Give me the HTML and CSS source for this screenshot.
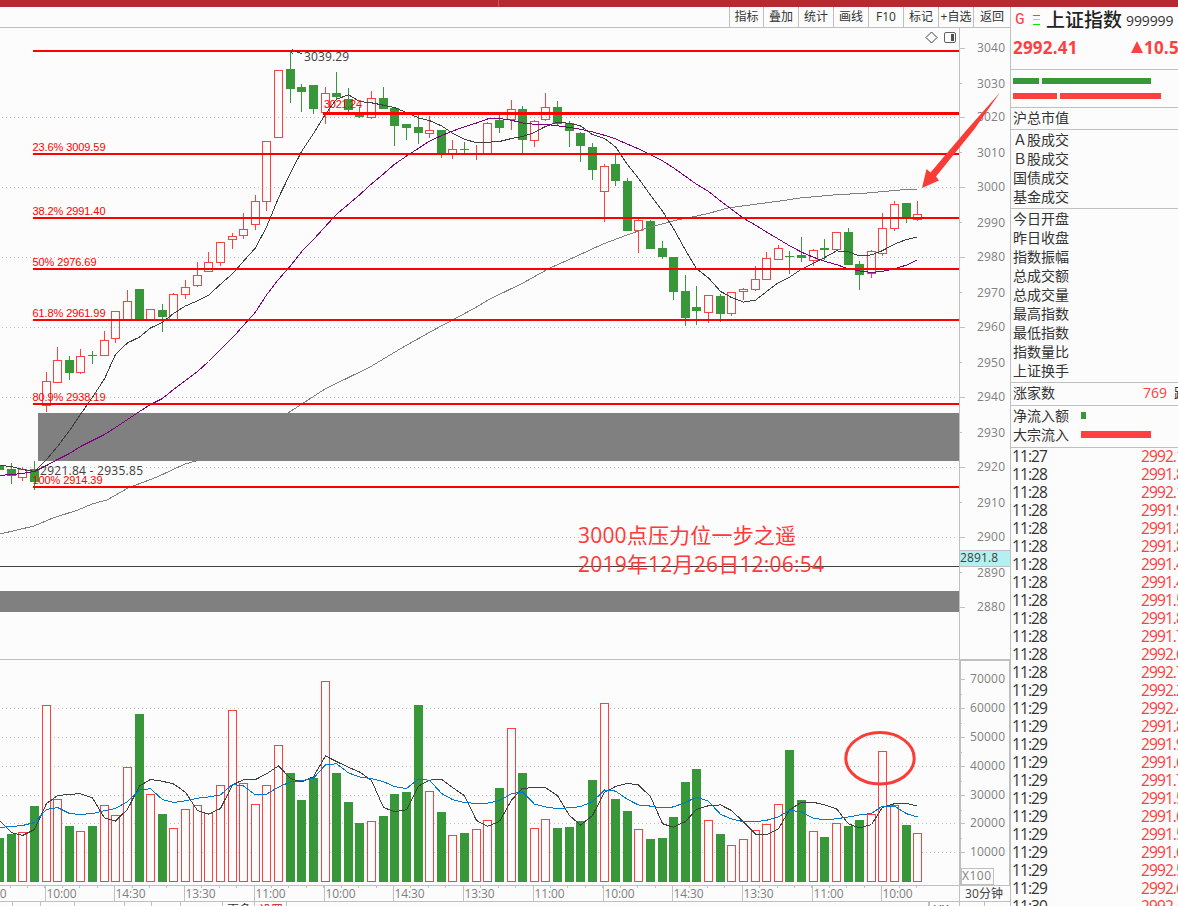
FILE: index.html
```html
<!DOCTYPE html>
<html lang="zh-CN">
<head>
    <meta charset="UTF-8">
    <meta name="viewport" content="width=device-width, initial-scale=1.0">
    <title>上证指数 999999</title>
    <link rel="stylesheet" href="styles.css">
</head>
<body>
    <div class="titlebar"></div>
    <div class="main">
        <div class="left">
            <div class="toolbar">
                <span class="tool first">指标</span>
                <span class="tool">叠加</span>
                <span class="tool">统计</span>
                <span class="tool">画线</span>
                <span class="tool">F10</span>
                <span class="tool">标记</span>
                <span class="tool">+自选</span>
                <span class="tool last">返回</span>
            </div>
            <svg class="chart" width="1010" height="878" viewBox="0 28 1010 878">
                <g id="grid"></g>
                <g id="candles"></g>
                <path class="ma60" d="M0 534L34 526L53 518L78 510L92 504L107 500L128 488L157 477L185 464L196 461L240 438L288 413L325 389L370 367L400 349L430 332L460 316L475 308L490 299L523 283L550 268L577 256L603 244L627 235L647 228L677 220L695 216.5L710 213L728 208L757 204L780 201L800 198L833 195L867 193L900 190L917 189"/>
                <!-- gaps -->
                <rect class="gap" x="38" y="413" width="921" height="48"/>
                <rect class="gap" x="0" y="591" width="959" height="21"/>
                <g id="averages"></g>
                <rect class="cross" x="0" y="566" width="959" height="1"/>
                <g id="fib"></g>
                <text class="fib-text" x="324" y="108" textLength="38">3021.24</text>
                <rect class="fib-line" x="323" y="112" width="636" height="3"/>
                <path class="pointer" d="M291 51L293 49M293 54L291 52M295 51L302 54"/>
                <text class="note" x="304" y="61" textLength="45">3039.29</text>
                <text class="note" x="40" y="475" textLength="103">2921.84 - 2935.85</text>
                <path class="diamond" d="M931.5 32L937 37.5L931.5 43L926 37.5Z"/>
                <rect class="pane" x="944.5" y="32.5" width="11" height="10" rx="1.5"/>
                <rect class="pane-fill" x="951" y="34" width="3" height="7"/>
                <g id="volume"></g>
                <g id="axis"></g>
                <rect class="price-tag" x="959.5" y="550.5" width="51" height="16"/>
                <text class="note" x="960" y="562" textLength="38">2891.8</text>
                <rect class="frame" x="960.5" y="660.5" width="49" height="225"/>
                <rect class="frame" x="961.5" y="868.5" width="32" height="16"/>
                <text class="label" x="962" y="880" textLength="29">X100</text>
                <text class="note" x="965" y="898" textLength="38">30分钟</text>
                <text class="big" x="578" y="543" textLength="218">3000点压力位一步之遥</text>
                <text class="big" x="578" y="572" textLength="246">2019年12月26日12:06:54</text>
                <ellipse class="circle" cx="880" cy="758.3" rx="34.2" ry="25.7"/>
                <path class="arrow" d="M922 188L926.5 169L930.5 172.5L967.5 129L1000 92.5L974.5 129L936 176.5L939 180.5Z"/>
                <text class="tab" x="227" y="914">更多</text>
                <text class="tab red" x="259" y="915">设置</text>
                <text class="tab" x="934" y="914">VK</text>
            </svg>
        </div>
        <div class="panel">
            <div class="head">
                <div class="name">
                    <span class="g">G</span>
                    <svg class="bars" width="8" height="12" viewBox="0 0 8 12">
                        <rect x="0" y="1" width="7" height="1" fill="#ff4040"/>
                        <rect x="0" y="5" width="7" height="1" fill="#c0c0c0"/>
                        <rect x="0" y="10" width="7" height="1" fill="#00e600"/>
                    </svg>
                    <span class="stock">上证指数</span>
                    <span class="code">999999</span>
                </div>
                <div class="price"><span class="last-price">2992.41</span><svg class="up" width="12" height="12" viewBox="0 0 12 12"><path d="M6 0L12 12H0Z"/></svg><span>10.53</span></div>
            </div>
            <div class="strength">
                <div class="strip green"><i class="w26"></i><i class="w109"></i></div>
                <div class="strip"><i class="w44"></i><i class="w101"></i></div>
            </div>
            <div class="box cap"><p>沪总市值</p></div>
            <div class="box deal">
                <p>Ａ股成交</p>
                <p>Ｂ股成交</p>
                <p>国债成交</p>
                <p>基金成交</p>
            </div>
            <div class="box index">
                <p>今日开盘</p>
                <p>昨日收盘</p>
                <p>指数振幅</p>
                <p>总成交额</p>
                <p>总成交量</p>
                <p>最高指数</p>
                <p>最低指数</p>
                <p>指数量比</p>
                <p>上证换手</p>
            </div>
            <div class="box count"><p><span class="count-name">涨家数</span><span class="count-num">769</span>跌</p></div>
            <div class="box flow">
                <p>净流入额<i class="bar green"></i></p>
                <p>大宗流入<i class="bar big-in"></i></p>
            </div>
            <div class="ticks" id="ticks"></div>
        </div>
    </div>
    <script src="chart.js"></script>
</body>
</html>
```

FILE: styles.css
```css
* {
    box-sizing: border-box;
}
body {
    margin: 0;
    width: 1178px;
    height: 906px;
    overflow: hidden;
    background-color: #fcfcfc;
    color: #333;
    font-family: "Open Sans", "Noto Sans CJK SC", sans-serif;
}
p {
    margin: 0;
}
.titlebar {
    height: 7px;
    background: linear-gradient(to right, #b42a30 498px, #c8565a 498px, #c8565a 499px, #b42a30 499px);
}
.main {
    display: flex;
    height: 899px;
}
.left {
    width: 1010px;
    flex: none;
}
.toolbar {
    display: flex;
    justify-content: flex-end;
    height: 21px;
    border-bottom: 1px solid #c0c0c0;
}
.tool {
    width: 35px;
    border-left: 1px solid #c0c0c0;
    font-size: 12px;
    line-height: 19px;
    text-align: center;
    white-space: nowrap;
}
.tool.first {
    width: 34px;
}
.tool.last {
    width: 37px;
}
.chart {
    display: block;
    font-size: 12px;
    shape-rendering: crispEdges;
}
.dots {
    stroke: #c0c0c0;
    stroke-dasharray: 1 3;
}
.line {
    fill: #c0c0c0;
}
.frame {
    fill: none;
    stroke: #c0c0c0;
}
.label {
    fill: #808080;
}
.note {
    fill: #404040;
}
.up-bar {
    fill: #fcfcfc;
    stroke: #ff4040;
}
.up-bar.hollow {
    fill: none;
}
.up-wick {
    fill: #ff4040;
}
.down-bar {
    fill: #389738;
}
.ma60, .ma7, .ma20, .ma10 {
    fill: none;
    stroke: #808080;
    stroke-width: 1;
}
.ma7 {
    stroke: #404040;
}
.ma20 {
    stroke: #800080;
}
.ma10 {
    stroke: #0078d0;
}
.gap {
    fill: #808080;
}
.cross {
    fill: #404040;
}
.fib-line {
    fill: #f00;
}
.fib-text {
    fill: #f00;
    font-family: "Liberation Sans", Arial, sans-serif;
    font-size: 11px;
}
.pointer, .diamond {
    fill: none;
    stroke: #404040;
}
.diamond {
    shape-rendering: auto;
}
.pane {
    fill: none;
    stroke: #606060;
    shape-rendering: auto;
}
.pane-fill {
    fill: #505050;
}
.price-tag {
    fill: #b4f0f0;
    stroke: #c0c0c0;
}
.big {
    fill: #ff3838;
    font-size: 21px;
}
.circle {
    fill: none;
    stroke: #fb3b36;
    stroke-width: 3;
    shape-rendering: auto;
}
.arrow {
    fill: #fb3b36;
    shape-rendering: auto;
}
.tab {
    fill: #333;
    font-size: 12px;
}
.tab.red {
    fill: #c00;
}
.panel {
    width: 168px;
    flex: none;
    overflow: hidden;
    border-left: 1px solid #c0c0c0;
    font-size: 14px;
}
.head {
    height: 63px;
    border-bottom: 1px solid #c0c0c0;
    white-space: nowrap;
}
.name {
    display: flex;
    align-items: center;
    height: 26px;
}
.g {
    width: 22px;
    padding-left: 4px;
    color: #ff4040;
    font-family: "Liberation Mono", monospace;
    font-size: 16px;
}
.bars {
    width: 8px;
    margin-right: 5px;
    flex: none;
}
.stock {
    width: 80px;
    font-size: 19px;
    font-weight: 500;
    line-height: 26px;
    color: #222;
}
.code {
    font-size: 14px;
    line-height: 26px;
    padding-top: 2px;
    letter-spacing: -0.1px;
}
.price {
    display: flex;
    align-items: center;
    height: 28px;
    padding-left: 2px;
    color: #ff4040;
    font-size: 17px;
    font-weight: bold;
    letter-spacing: 0.2px;
}
.last-price {
    width: 118px;
    flex: none;
}
.up {
    flex: none;
    margin-right: 1px;
    fill: #ff4040;
}
.strength {
    height: 38px;
    padding: 8px 0 0 2px;
    border-bottom: 1px solid #c0c0c0;
}
.strip {
    display: flex;
    gap: 3px;
    height: 6px;
    margin-bottom: 9px;
}
.strip i {
    background-color: #ff4040;
}
.strip.green i {
    background-color: #389738;
}
.w26 {
    width: 26px;
}
.w109 {
    width: 109px;
}
.w44 {
    width: 44px;
}
.w101 {
    width: 101px;
}
.box {
    padding: 0 0 0 2px;
    border-bottom: 1px solid #c0c0c0;
    line-height: 19px;
    white-space: nowrap;
}
.box p {
    display: flex;
    align-items: center;
    height: 19px;
}
.cap {
    height: 22px;
}
.deal {
    height: 79px;
}
.index {
    height: 174px;
}
.count {
    height: 23px;
}
.count-name {
    width: 130px;
    flex: none;
}
.count-num {
    width: 31px;
    flex: none;
    color: #ff4040;
}
.flow {
    height: 42px;
}
.bar {
    height: 7px;
    margin-left: 12px;
    background-color: #ff4040;
}
.bar.green {
    width: 5px;
    background-color: #389738;
}
.bar.big-in {
    width: 70px;
}
.ticks {
    margin-top: -1px;
}
.tick {
    display: flex;
    height: 18px;
    padding-left: 1px;
    font-size: 15.5px;
    line-height: 18px;
    letter-spacing: -0.9px;
}
.tick-time {
    width: 129px;
    flex: none;
}
.tick-price {
    color: #ff4040;
}
```

FILE: chart.js
```js
// direction, high, body top, body bottom, low, volume top
const bars = [
    'g 464 465 470 470 838', 'g 463 469 476 484 834', 'r 467 469 477 481 832', 'g 461 469 482 490 806',
    'r 372 381 405 412 705', 'r 347 360 382 382 799', 'g 356 360 373 380 826', 'r 349 356 372 374 831',
    'g 351 355 356 364 826', 'r 331 340 355 355 805', 'r 311 311 338 343 815', 'r 290 301 319 320 767',
    'g 289 289 319 319 714', 'r 309 309 319 320 794', 'g 304 310 317 332 814', 'r 293 294 319 320 828',
    'r 280 287 294 299 809', 'r 262 275 285 287 805', 'r 252 262 271 272 813', 'r 242 242 262 266 785',
    'r 233 236 239 249 710', 'r 213 229 235 239 783', 'r 195 201 224 230 804', 'r 141 141 201 211 785',
    'r 70 70 137 137 745', 'g 50 69 89 103 773', 'g 84 87 92 112 800', 'g 85 85 109 114 778',
    'r 87 93 112 124 681', 'g 72 93 97 100 773', 'g 88 99 110 112 802', 'g 107 113 117 118 823',
    'r 91 98 117 119 821', 'g 87 98 109 109 816', 'g 108 108 126 146 794', 'g 124 124 128 140 792',
    'g 114 127 133 144 705', 'r 116 130 133 138 791', 'g 130 130 154 158 812', 'r 140 149 153 159 835',
    'g 142 149 150 154 833', 'r 145 153 154 160 829', 'r 122 123 153 154 820', 'g 115 120 128 133 788',
    'r 100 109 119 130 728', 'g 106 109 140 154 773', 'r 120 121 140 147 828', 'r 93 107 119 121 819',
    'g 101 107 124 126 828', 'g 121 123 131 147 827', 'g 132 133 146 162 821', 'g 143 147 170 180 780',
    'r 164 166 191 222 703', 'g 154 164 181 186 799', 'g 178 181 231 231 811', 'r 218 220 230 253 829',
    'g 220 221 249 249 839', 'g 241 248 257 259 838', 'g 257 257 292 300 817', 'g 275 291 318 326 782',
    'g 286 307 311 325 769', 'r 295 295 312 323 820', 'g 294 296 314 322 834', 'r 292 292 313 316 845',
    'r 288 289 291 300 839', 'r 266 279 289 291 830', 'r 252 258 279 279 824', 'r 245 248 259 259 804',
    'g 251 256 257 274 750', 'g 237 255 258 262 800', 'r 249 250 260 266 831', 'g 239 248 250 260 837',
    'r 232 232 249 250 823', 'g 228 232 265 265 826', 'g 261 264 275 290 820', 'r 250 251 273 278 814',
    'r 213 228 253 256 751', 'r 201 204 228 231 805', 'g 203 203 218 223 825', 'r 201 214 219 221 833'
].map(s => {
    const p = s.split(' ');
    return { dir: p[0], high: +p[1], top: +p[2], bottom: +p[3], low: +p[4], vol: +p[5] };
});

function put(id, html) {
    document.getElementById(id).innerHTML = html;
}

function rect(cls, x, y, w, h) {
    return `<rect class="${cls}" x="${x}" y="${y}" width="${w}" height="${h}"/>`;
}

function label(cls, x, y, w, text) {
    return `<text class="${cls}" x="${x}" y="${y}" textLength="${w}">${text}</text>`;
}

// the first four bars lie left of the 10:00 bar
function barX(i) {
    return Math.floor(46.13 + 11.6225 * (i - 4));
}

function average(values, n, head, cls) {
    let d = '';
    values.forEach((v, i) => {
        let y = head[i];
        if (i >= head.length) {
            y = values.slice(i - n + 1, i + 1).reduce((a, b) => a + b, 0) / n;
        }
        d += (i ? 'L' : 'M') + (barX(i) + 0.5) + ' ' + (y + 0.5).toFixed(1);
    });
    return `<path class="${cls}" d="${d}"/>`;
}

// grid
let html = '';
[117, 187, 257, 327, 397, 467, 537, 708, 737, 766, 795, 823, 852].forEach(y => {
    html += `<path class="dots" d="M2 ${y + 0.5}H957"/>`;
});
put('grid', html);

// candles and volume
let candles = '';
let volume = '';
bars.forEach((b, i) => {
    const x = barX(i);
    if (b.dir === 'r') {
        candles += rect('up-wick', x, b.high, 1, b.top - b.high);
        candles += rect('up-wick', x, b.bottom, 1, b.low - b.bottom);
        candles += rect('up-bar hollow', x - 3.5, b.top + 0.5, 8, b.bottom - b.top);
        volume += rect('up-bar', x - 3.5, b.vol + 0.5, 8, 881 - b.vol);
    } else {
        candles += rect('down-bar', x, b.high, 1, b.low - b.high);
        candles += rect('down-bar', x - 4, b.top, 9, b.bottom - b.top);
        volume += rect('down-bar', x - 4, b.vol, 9, 882 - b.vol);
    }
});
put('candles', candles);

const close = bars.map(b => b.dir === 'r' ? b.top : b.bottom);
const vols = bars.map(b => b.vol);
put('averages',
    average(close, 7, [465, 466, 469, 471, 459, 446], 'ma7') +
    average(close, 20, [475, 474, 473, 471, 465, 459, 453, 446, 440, 434, 427, 419, 411, 404, 398, 389, 380, 371, 361], 'ma20'));
volume += average(vols, 5, [820, 832, 835, 829], 'ma7');
volume += average(vols, 10, [827, 826, 825, 822, 809, 807, 813, 814, 813], 'ma10');
put('volume', volume);

// fibonacci levels
html = rect('fib-line', 33, 50, 926, 2);
[[153, '23.6% 3009.59'], [217, '38.2% 2991.40'], [268, '50% 2976.69'], [319, '61.8% 2961.99'], [403, '80.9% 2938.19'], [486, '100% 2914.39']].forEach(f => {
    html += rect('fib-line', 33, f[0], 926, 2);
    html += label('fib-text', 32.5, f[0] - 2, f[1].length === 13 ? 73 : f[1].length === 12 ? 70 : 64, f[1]);
});
put('fib', html);

// axes
html = rect('line', 959, 28, 1, 878) + rect('line', 0, 659, 1010, 1);
html += rect('line', 0, 885, 1010, 1) + rect('line', 0, 901, 1010, 1);
[48, 83, 117, 152, 187, 222, 257, 292, 327, 362, 397, 432, 467, 502, 537, 572, 607].forEach((y, i) => {
    html += rect('line', 960, y, i % 2 ? 2 : 5, 1);
    html += label('label', 977, y + (i % 2 ? 5 : 4), 28, 3040 - i * 10);
});
[679, 708, 737, 766, 795, 823, 852].forEach((y, i) => {
    html += rect('line', 960, y, 5, 1);
    if (i < 6) {
        html += rect('line', 960, y + 15, 2, 1);
    }
    html += label('label', 970, y + 4, 35, 70000 - i * 10000);
});
for (let x = 10.1; x < 920; x += 17.43) {
    html += rect('line', Math.floor(x), 886, 1, 2);
}
[-25, 45, 114, 184, 254, 324, 393, 463, 533, 603, 672, 742, 812, 881].forEach((x, i) => {
    html += rect('line', x, 886, 1, 15);
    html += label('label', x + 1.5, 898, 30, ['11:00', '10:00', '14:30', '13:30'][i % 4]);
});
[12, 40, 74, 124, 151, 180, 222, 254, 286, 928, 929, 984].forEach(x => {
    html += rect('line', x, 902, 1, 4);
});
put('axis', html);

// ticks
const prices = ['2992.1', '2991.8', '2992.1', '2991.9', '2991.8', '2991.8', '2991.4', '2991.4', '2991.5', '2991.8', '2991.7', '2992.6', '2992.7',
    '2992.2', '2992.4', '2991.8', '2991.9', '2991.6', '2991.7', '2991.5', '2991.6', '2991.5', '2991.6', '2992.5', '2992.6', '2992.4'];
html = '';
prices.forEach((p, i) => {
    const time = i === 0 ? '11:27' : i < 13 ? '11:28' : i < 25 ? '11:29' : '11:30';
    html += `<div class="tick"><span class="tick-time">${time}</span><span class="tick-price">${p}</span></div>`;
});
put('ticks', html);
```
